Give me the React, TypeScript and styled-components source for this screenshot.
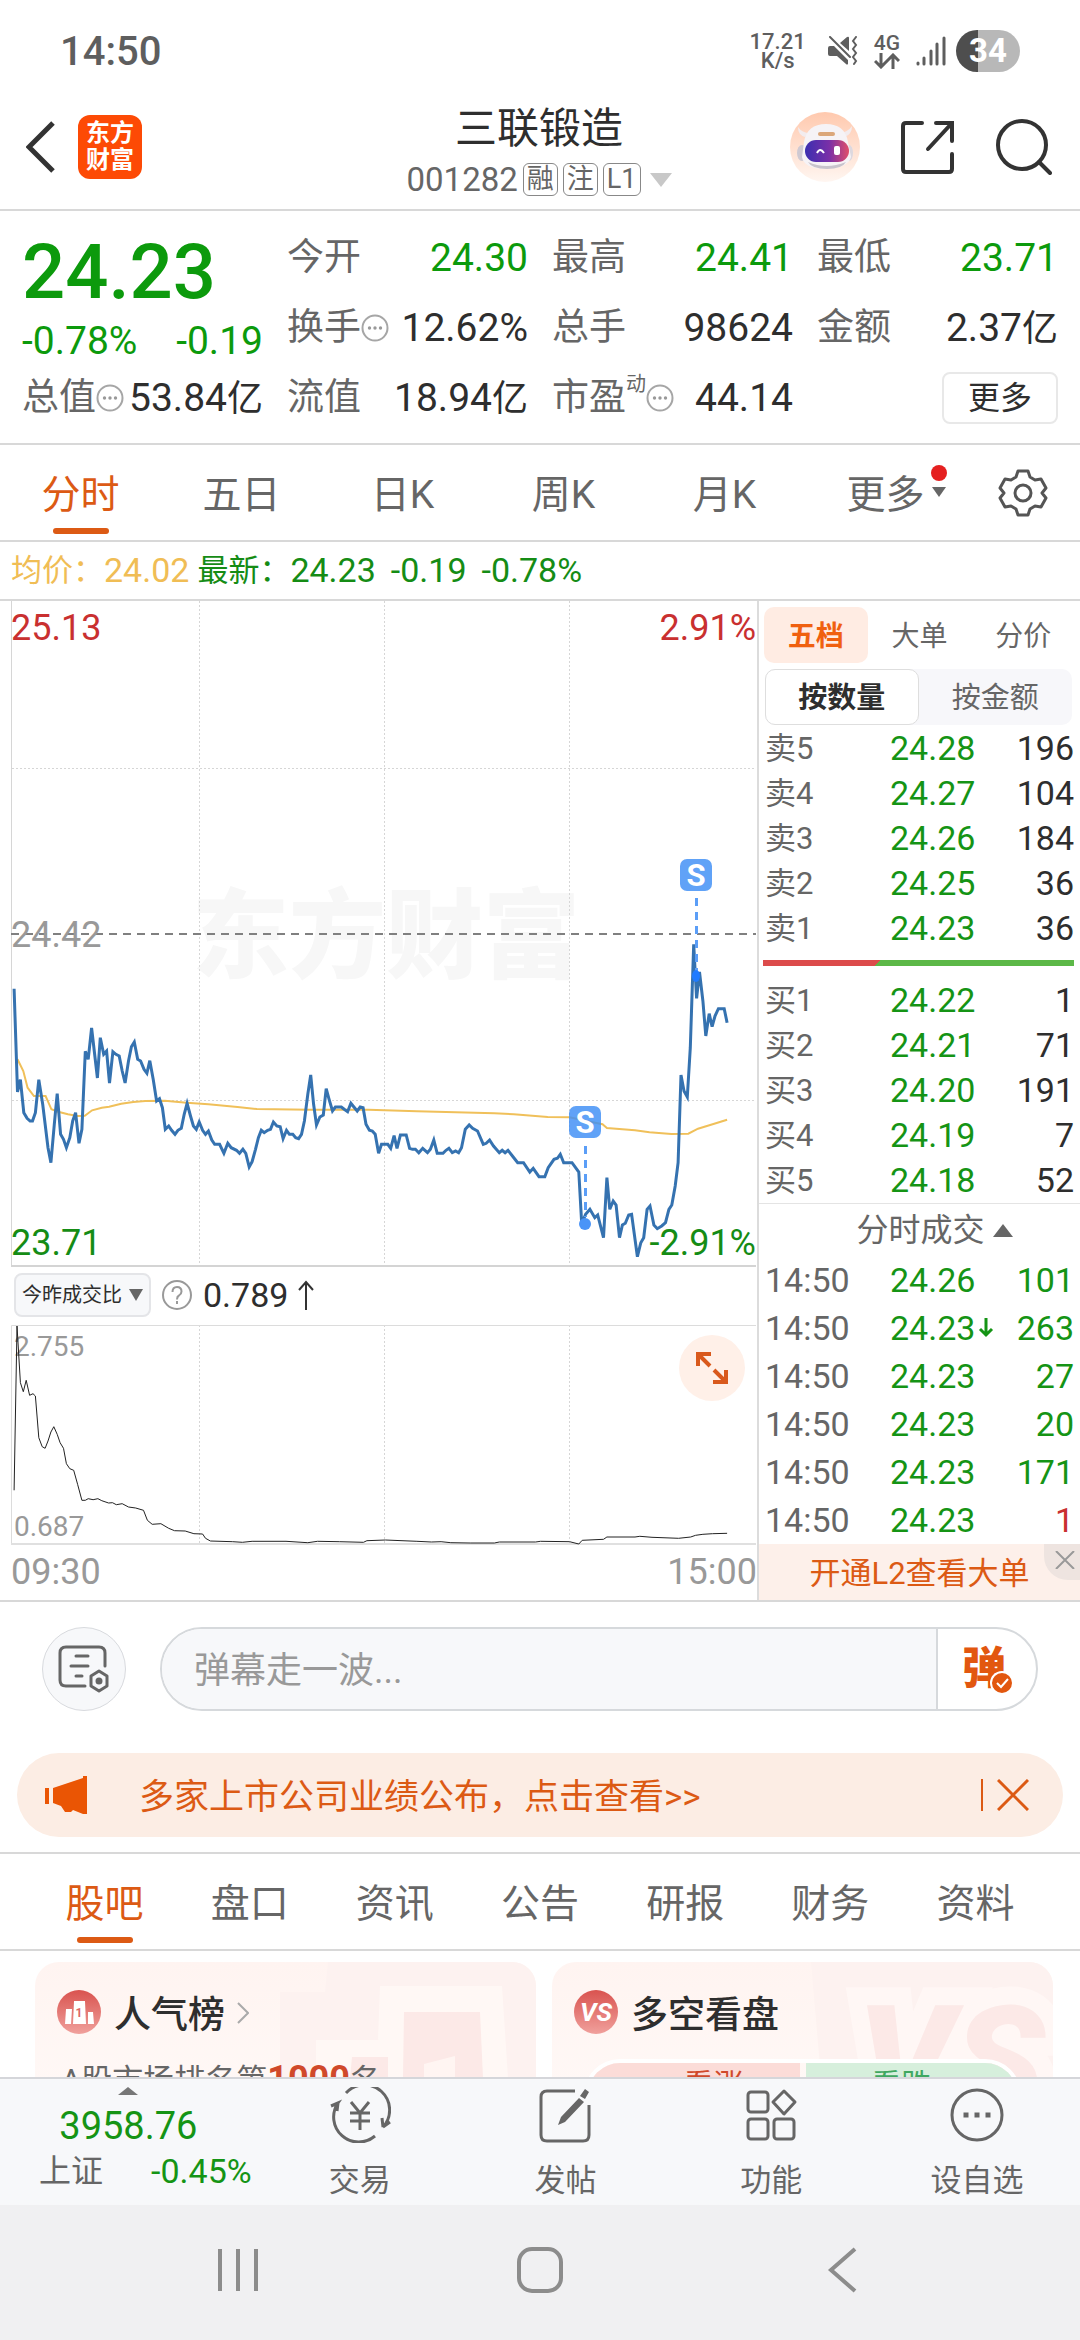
import React, { useState } from 'react';
import styled, { createGlobalStyle } from 'styled-components';

const quotes = [
  { label: '今开', value: '24.30', color: '#0c9a0c' },
  { label: '最高', value: '24.41', color: '#0c9a0c' },
  { label: '最低', value: '23.71', color: '#0c9a0c' },
  { label: '换手', value: '12.62%', info: true },
  { label: '总手', value: '98624' },
  { label: '金额', value: '2.37', unit: '亿' },
  { label: '总值', value: '53.84', unit: '亿', info: true },
  { label: '流值', value: '18.94', unit: '亿' },
  { label: '市盈', value: '44.14', sup: '动', info: true },
];

const sells = [
  ['卖5', '24.28', '196'],
  ['卖4', '24.27', '104'],
  ['卖3', '24.26', '184'],
  ['卖2', '24.25', '36'],
  ['卖1', '24.23', '36'],
];

const buys = [
  ['买1', '24.22', '1'],
  ['买2', '24.21', '71'],
  ['买3', '24.20', '191'],
  ['买4', '24.19', '7'],
  ['买5', '24.18', '52'],
];

const trades = [
  { price: '24.26', qty: '101' },
  { price: '24.23', qty: '263', down: true },
  { price: '24.23', qty: '27' },
  { price: '24.23', qty: '20' },
  { price: '24.23', qty: '171' },
  { price: '24.23', qty: '1', red: true },
];

// x, y pairs in sample units, scaled to the plot by toPoints
const priceLine =
  '29,443 36,753 42,716 49,815 56,832 62,840 67,840 73,815 80,716 88,790 99,920 105,965 112,850 118,758 125,880 131,895 137,920 144,890 150,840 156,815 163,907 169,865 176,631 182,655 189,561 201,711 207,590 214,640 220,630 226,726 233,632 239,640 246,645 252,690 258,726 265,660 271,617 277,603 284,655 290,660 297,685 303,697 309,659 316,715 323,780 329,773 335,800 341,865 348,855 354,868 361,880 367,868 374,862 380,820 386,787 393,825 399,855 405,865 411,843 418,868 424,880 430,870 437,897 443,910 453,910 462,937 470,907 477,920 488,928 494,937 501,925 507,937 514,978 520,962 527,925 533,890 539,868 545,875 552,868 558,865 564,843 571,855 578,857 584,893 591,868 597,880 604,880 610,890 616,893 622,880 628,840 635,760 641,702 647,790 653,852 660,828 667,822 673,743 679,775 686,810 692,798 704,798 710,805 717,812 724,787 730,798 737,810 743,798 749,800 755,850 762,868 768,870 774,880 781,937 787,910 800,910 806,922 813,884 819,922 826,882 838,882 845,922 851,925 857,925 864,935 872,922 882,935 888,925 895,897 902,937 914,937 920,928 926,922 933,935 940,930 946,935 952,920 960,865 968,852 975,862 985,870 997,910 1003,907 1010,897 1018,915 1030,935 1036,928 1042,935 1048,928 1060,950 1068,965 1080,965 1093,993 1100,982 1112,1007 1124,1007 1131,980 1143,955 1150,952 1156,940 1163,965 1180,965 1194,993 1200,1148 1208,1120 1217,1105 1227,1130 1233,1122 1245,1190 1252,1010 1258,1105 1265,1080 1271,1092 1278,1190 1284,1152 1290,1147 1297,1122 1303,1120 1315,1247 1322,1205 1328,1190 1335,1105 1341,1095 1349,1152 1356,1163 1365,1155 1373,1145 1380,1105 1386,1092 1393,1035 1399,965 1405,702 1411,750 1418,768 1424,620 1431,310 1437,472 1443,393 1450,480 1456,585 1463,518 1469,557 1475,525 1482,503 1494,503 1500,545';

const averageLine =
  '36,655 48,690 57,740 70,765 94,765 106,805 120,812 140,820 160,825 175,824 190,808 210,800 225,797 250,788 275,783 300,780 340,779 385,785 430,790 490,798 530,804 640,806 760,806 860,811 1020,817 1060,820 1130,828 1175,829 1210,840 1243,850 1252,861 1310,868 1340,874 1385,879 1420,878 1440,863 1470,850 1500,836';

const ratioLine =
  '29,748 35,255 42,425 48,452 54,418 61,463 68,458 73,465 80,590 87,617 93,622 99,600 105,573 111,557 118,580 124,605 131,622 137,668 144,683 152,688 160,730 169,778 176,778 182,773 192,776 202,773 210,779 224,786 232,785 240,791 252,788 265,798 280,801 296,808 304,838 314,850 332,848 348,862 360,869 382,870 400,878 418,879 424,892 434,900 480,902 500,904 520,901 590,901 635,905 655,901 700,902 750,904 757,899 795,897 860,901 890,903 910,902 930,905 970,906 1020,906 1030,903 1105,903 1115,901 1175,902 1194,909 1201,898 1245,895 1252,888 1310,888 1320,886 1345,889 1400,892 1425,888 1435,883 1450,880 1470,878 1500,877';

const toPoints = (line: string, offset: number) =>
  line
    .split(' ')
    .map((pair) => {
      const [x, y] = pair.split(',').map(Number);
      return `${(x / 2.063).toFixed(1)},${(y / 3 + offset).toFixed(1)}`;
    })
    .join(' ');

const InfoIcon = () => (
  <svg width='28' height='28' viewBox='0 0 28 28' fill='none'>
    <circle cx='14' cy='14' r='12.5' stroke='#a6a6a6' strokeWidth='2' />
    <g fill='#999'>
      <circle cx='8.5' cy='14' r='1.7' />
      <circle cx='14' cy='14' r='1.7' />
      <circle cx='19.5' cy='14' r='1.7' />
    </g>
  </svg>
);

const Marker = ({ x, y }: { x: number; y: number }) => (
  <g>
    <rect x={x - 16} y={y - 16} width='32' height='32' rx='7' fill='#3d8df5' fillOpacity='0.82' />
    <text x={x} y={y + 11} textAnchor='middle' fontSize='31' fontWeight='700' fill='#fff'>
      S
    </text>
  </g>
);

const PriceChart = () => (
  <ChartSvg viewBox='0 0 757 666'>
    <text x='386' y='369' textAnchor='middle' fontSize='97' fontWeight='900' fill='#f7f7f7'>
      东方财富
    </text>
    <g stroke='#d6d6d6' strokeDasharray='2 2'>
      <path d='M199.5 0V664M384.5 0V664M569.5 0V664M12 167.5H756M12 499.5H756' />
    </g>
    <path d='M11.5 0V665' stroke='#d6d6d6' />
    <path d='M11 665H756' stroke='#d4d4d4' strokeWidth='2' />
    <path d='M11 333H756' stroke='#808080' strokeWidth='2' strokeDasharray='8 6' />
    <g fontSize='36'>
      <text x='11' y='39' fill='#c93030'>25.13</text>
      <text x='756' y='39' textAnchor='end' fill='#c93030'>2.91%</text>
      <text x='11' y='346' fill='#999'>24.42</text>
      <text x='11' y='654' fill='#158c15'>23.71</text>
    </g>
    <polyline points={toPoints(averageLine, 240)} fill='none' stroke='#f0c05a' strokeWidth='2' />
    <polyline points={toPoints(priceLine, 240)} fill='none' stroke='#3572b0' strokeWidth='3' />
    <text x='756' y='654' fontSize='36' textAnchor='end' fill='#158c15'>-2.91%</text>
    <path d='M696.5 297V375M585.5 545V616' stroke='#5b9ef7' strokeWidth='3' strokeDasharray='8 6' />
    <ellipse cx='696' cy='375' rx='4' ry='6' fill='#1f7bff' />
    <circle cx='585' cy='623' r='6' fill='#4a94f7' />
    <Marker x={696} y={274} />
    <Marker x={585} y={521} />
  </ChartSvg>
);

const RatioChart = () => (
  <ChartSvg viewBox='0 0 757 220'>
    <g stroke='#d6d6d6' strokeDasharray='2 2'>
      <path d='M199.5 0V219M384.5 0V219M569.5 0V219' />
    </g>
    <path d='M11.5 219V0.5H756' fill='none' stroke='#dcdcdc' />
    <path d='M11 219H756' stroke='#e0e0e0' strokeWidth='2' />
    <g fontSize='28' fill='#999'>
      <text x='14' y='31'>2.755</text>
      <text x='14' y='211'>0.687</text>
    </g>
    <polyline points={toPoints(ratioLine, -84)} fill='none' stroke='#222' strokeWidth='1' />
  </ChartSvg>
);

const App = () => {
  const [comment, setComment] = useState('');

  return (
    <Page>
      <GlobalStyle />
      <StatusBar>
        <Clock>14:50</Clock>
        <StatusIcons>
          <Speed>
            <span>17.21</span>
            <span>K/s</span>
          </Speed>
          <svg width='30' height='30' viewBox='0 0 30 30' fill='#5e5e5e'>
            <path d='M0 12q0-2 2-2h4l14 14v4q-1 1-2 0l-9-8H2q-2 0-2-2zM12 7l7-6q2-1 2 1v13z' />
            <path
              d='M2 1l20 20M28 1l-3 4 3 4-3 4 3 4-3 4 3 4-2 3'
              fill='none'
              stroke='#5e5e5e'
              strokeWidth='2'
              strokeLinecap='round'
            />
          </svg>
          <Network>
            4G
            <svg width='26' height='16' viewBox='0 0 26 16' fill='none' stroke='#5e5e5e' strokeWidth='3'>
              <path d='M7 0v14M1 8l6 6 6-6M19 16V2M13 8l6-6 6 6' />
            </svg>
          </Network>
          <svg width='30' height='30' viewBox='0 0 30 30' stroke='#5e5e5e' strokeWidth='3' strokeLinecap='round'>
            <path d='M2 27v1M8 22v6M15 15v13M21 8v20M28 2v26' />
          </svg>
          <Battery>34</Battery>
        </StatusIcons>
      </StatusBar>

      <Header>
        <HeaderSide>
          <IconButton aria-label='返回'>
            <svg width='30' height='52' viewBox='0 0 30 52' fill='none' stroke='#333' strokeWidth='5'>
              <path d='M27 2L3 26l24 24' />
            </svg>
          </IconButton>
          <Logo>
            东方
            <br />
            财富
          </Logo>
        </HeaderSide>
        <HeaderTitle>
          <h1>三联锻造</h1>
          <StockCode>
            001282
            <Tag>融</Tag>
            <Tag>注</Tag>
            <Tag>L1</Tag>
            <svg width='22' height='14' viewBox='0 0 22 14' fill='#c8c8c8'>
              <path d='M0 0h22L11 14z' />
            </svg>
          </StockCode>
        </HeaderTitle>
        <HeaderSide $right>
          <IconButton aria-label='助手'>
            <svg width='70' height='70' viewBox='0 0 70 70'>
              <defs>
                <linearGradient id='halo' x2='0' y2='1'>
                  <stop stopColor='#ffc9ae' />
                  <stop offset='1' stopColor='#fff6f1' />
                </linearGradient>
                <linearGradient id='visor'>
                  <stop stopColor='#3b2fb0' />
                  <stop offset='0.55' stopColor='#7a2fa8' />
                  <stop offset='1' stopColor='#e0506a' />
                </linearGradient>
              </defs>
              <circle cx='35' cy='35' r='35' fill='url(#halo)' />
              <path d='M8 15q0 8 7 10l5-4q-8 0-12-6zM62 14q0 8-7 11l-5-4q8-1 12-7z' fill='#f3ecee' />
              <ellipse cx='12' cy='41' rx='5' ry='8' fill='#cfc9d2' />
              <ellipse cx='59' cy='41' rx='4' ry='8' fill='#ddd8df' />
              <path d='M14 30Q17 12 36 12t22 18l3 15q-3 11-25 12-22 0-24-12z' fill='#f6f3f6' />
              <path d='M18 50q18 8 38 0-4 7-19 7t-19-7z' fill='#c8c3cc' />
              <rect x='28' y='20' width='17' height='4' rx='2' fill='#dba77a' />
              <rect x='15' y='28' width='44' height='22' rx='11' fill='url(#visor)' />
              <path d='M27 41q3-6 7 0' fill='none' stroke='#fff' strokeWidth='2' />
              <rect x='44' y='34' width='6' height='9' rx='2' fill='#fff' />
            </svg>
          </IconButton>
          <IconButton aria-label='分享'>
            <svg width='56' height='56' viewBox='0 0 56 56' fill='none' stroke='#333' strokeWidth='4' strokeLinecap='round'>
              <path d='M22 4H6Q3 4 3 7v43q0 3 3 3h43q3 0 3-3V35M36 4h16v18M52 4L28 30' />
            </svg>
          </IconButton>
          <IconButton aria-label='搜索'>
            <svg width='56' height='56' viewBox='0 0 56 56' fill='none' stroke='#333' strokeWidth='4' strokeLinecap='round'>
              <circle cx='26' cy='26' r='24' />
              <path d='M43 43l11 11' />
            </svg>
          </IconButton>
        </HeaderSide>
      </Header>

      <QuoteSection>
        <LastPrice>
          <strong>24.23</strong>
          <Change>
            <span>-0.78%</span>
            <span>-0.19</span>
          </Change>
        </LastPrice>
        {quotes.map((quote) => (
          <Quote key={quote.label}>
            <QuoteLabel>
              {quote.label}
              {quote.sup && <sup>{quote.sup}</sup>}
              {quote.info && <InfoIcon />}
            </QuoteLabel>
            <QuoteValue $color={quote.color}>
              {quote.value}
              {quote.unit && <small>{quote.unit}</small>}
            </QuoteValue>
          </Quote>
        ))}
        <MoreButton>更多</MoreButton>
      </QuoteSection>

      <PeriodTabs>
        {['分时', '五日', '日K', '周K', '月K'].map((tab, index) => (
          <Tab key={tab} $active={index === 0}>
            {tab}
          </Tab>
        ))}
        <Tab>
          更多
          <MoreMark width='16' height='36' viewBox='0 0 16 36'>
            <circle cx='8' cy='8' r='8' fill='#e52020' />
            <path d='M1 22h14l-7 10z' fill='#666' />
          </MoreMark>
        </Tab>
        <IconButton aria-label='设置'>
          <svg width='50' height='50' viewBox='0 0 50 50' fill='none' stroke='#555' strokeWidth='3' strokeLinejoin='round'>
            <path d='M20 3h10l2 6 5 3 6-1 5 9-4 5 4 5-5 9-6-1-5 3-2 6H20l-2-6-5-3-6 1-5-9 4-5-4-5 5-9 6 1 5-3z' />
            <circle cx='25' cy='25' r='8' />
          </svg>
        </IconButton>
      </PeriodTabs>

      <PriceLine>
        <span>均价：</span>
        <b>24.02</b>
        <Latest>
          <span>最新：</span>
          <b>24.23</b>
          <b>-0.19</b>
          <b>-0.78%</b>
        </Latest>
      </PriceLine>

      <Market>
        <Charts>
          <PriceChart />
          <IndicatorBar>
            <Indicator>
              今昨成交比
              <svg width='14' height='12' viewBox='0 0 14 12' fill='#666'>
                <path d='M0 0h14L7 12z' />
              </svg>
            </Indicator>
            <svg width='32' height='32' viewBox='0 0 32 32' fill='none' stroke='#999' strokeWidth='2'>
              <circle cx='16' cy='16' r='14' />
              <path d='M11.500 13q0-5 4.500-5t4.500 4.500q0 2.500-2.500 4-2 1-2 4M16 22v3' />
            </svg>
            <span>0.789</span>
            <svg width='16' height='30' viewBox='0 0 16 30' fill='none' stroke='#333' strokeWidth='2'>
              <path d='M8 30V2M1 10l7-8 7 8' />
            </svg>
          </IndicatorBar>
          <RatioBox>
            <RatioChart />
            <ExpandButton aria-label='放大'>
              <svg width='32' height='32' viewBox='0 0 32 32' fill='none' stroke='#d9591c' strokeWidth='4'>
                <path d='M2 14V2h13M2 2l12 12M30 18v12H17M30 30L18 18' />
              </svg>
            </ExpandButton>
          </RatioBox>
          <TimeAxis>
            <span>09:30</span>
            <span>15:00</span>
          </TimeAxis>
        </Charts>

        <OrderBook>
          <BookTabs>
            <BookTab $active>五档</BookTab>
            <BookTab>大单</BookTab>
            <BookTab>分价</BookTab>
          </BookTabs>
          <Segment>
            <SegmentButton $active>按数量</SegmentButton>
            <SegmentButton>按金额</SegmentButton>
          </Segment>
          <BookTable>
            <tbody>
              {sells.map(([level, price, qty]) => (
                <tr key={level}>
                  <th>{level}</th>
                  <PriceCell>{price}</PriceCell>
                  <QtyCell>{qty}</QtyCell>
                </tr>
              ))}
            </tbody>
          </BookTable>
          <DepthBar />
          <BookTable>
            <tbody>
              {buys.map(([level, price, qty]) => (
                <tr key={level}>
                  <th>{level}</th>
                  <PriceCell>{price}</PriceCell>
                  <QtyCell>{qty}</QtyCell>
                </tr>
              ))}
            </tbody>
          </BookTable>
          <TradesTitle>
            分时成交
            <svg width='20' height='13' viewBox='0 0 20 13' fill='#666'>
              <path d='M0 13L10 0l10 13z' />
            </svg>
          </TradesTitle>
          <BookTable $tall>
            <tbody>
              {trades.map((trade, index) => (
                <tr key={index}>
                  <th>14:50</th>
                  <PriceCell>
                    {trade.price}
                    {trade.down && (
                      <svg width='16' height='22' viewBox='0 0 16 22' fill='none' stroke='#159415' strokeWidth='3'>
                        <path d='M8 0v17M2 11l6 6 6-6' />
                      </svg>
                    )}
                  </PriceCell>
                  <QtyCell $color={trade.red ? '#c93030' : '#159415'}>{trade.qty}</QtyCell>
                </tr>
              ))}
            </tbody>
          </BookTable>
          <LevelTwo>
            <a href='#l2'>开通L2查看大单</a>
            <CloseCorner aria-label='关闭'>
              <svg width='20' height='18' viewBox='0 0 20 18' stroke='#999' strokeWidth='2'>
                <path d='M1 0l18 18M19 0L1 18' />
              </svg>
            </CloseCorner>
          </LevelTwo>
        </OrderBook>
      </Market>

      <CommentRow>
        <RoundButton aria-label='弹幕设置'>
          <svg width='52' height='48' viewBox='0 0 52 48' fill='none' stroke='#666' strokeWidth='3' strokeLinecap='round'>
            <path d='M27 41H8q-6 0-6-6V8q0-6 6-6h33q6 0 6 6v13M18 11h12M13 21h17M18 31h6' />
            <path d='M41 26l8 5v10l-8 5-8-5V31z' strokeLinejoin='round' />
            <circle cx='41' cy='36' r='2' fill='#666' />
          </svg>
        </RoundButton>
        <CommentBox>
          <input
            aria-label='弹幕'
            placeholder='弹幕走一波...'
            value={comment}
            onChange={(e) => setComment(e.target.value)}
          />
          <BarrageButton>
            弹
            <BarrageCheck width='24' height='24' viewBox='0 0 24 24'>
              <circle cx='12' cy='12' r='11' fill='#e2570f' stroke='#fff' strokeWidth='2' />
              <path d='M7 12l4 4 7-8' fill='none' stroke='#fff' strokeWidth='2' />
            </BarrageCheck>
          </BarrageButton>
        </CommentBox>
      </CommentRow>

      <Notice>
        <svg width='44' height='38' viewBox='0 0 44 38' fill='#ea5504'>
          <path d='M0 12h4v16H0zM8 12L38 2V0h4v38h-4l-10-4-2 2h-6l-4-6-8-3z' />
        </svg>
        <a href='#notice'>多家上市公司业绩公布，点击查看&gt;&gt;</a>
        <IconButton aria-label='关闭'>
          <svg width='32' height='32' viewBox='0 0 32 32' stroke='#dc5a14' strokeWidth='3'>
            <path d='M1 1l30 30M31 1L1 31' />
          </svg>
        </IconButton>
      </Notice>

      <SectionTabs>
        {['股吧', '盘口', '资讯', '公告', '研报', '财务', '资料'].map((tab, index) => (
          <Tab key={tab} $active={index === 0}>
            {tab}
          </Tab>
        ))}
      </SectionTabs>

      <Cards>
        <Card>
          <CardArt width='256' height='116' viewBox='0 0 256 116'>
            <path d='M48 0h208v116H0V30h45z' fill='#fdf2f0' />
            <path d='M100 24h122l6 92H36V78h62z' fill='#fff8f5' />
            <path d='M124 50h76l3 66h-80zM72 95h36v21H70z' fill='#fce9e7' />
            <path d='M144 102l31-8v22h-31z' fill='#fff5f2' />
          </CardArt>
          <CardTitle>
            <svg width='45' height='45' viewBox='0 0 45 45'>
              <defs>
                <linearGradient id='badge' x2='0' y2='1'>
                  <stop stopColor='#d9534f' />
                  <stop offset='1' stopColor='#f0a09c' />
                </linearGradient>
              </defs>
              <circle cx='22' cy='22' r='22' fill='url(#badge)' />
              <path d='M9 19h6l-1 15H8zM17 11h11l1 23H16zM31 22h5l1 12h-6z' fill='#fff' />
              <text x='22' y='27' textAnchor='middle' fontSize='12' fontWeight='700' fill='#dd6662'>1</text>
            </svg>
            <h2>人气榜</h2>
            <svg width='12' height='22' viewBox='0 0 12 22' fill='none' stroke='#aaa' strokeWidth='2'>
              <path d='M1 1l10 10L1 21' />
            </svg>
          </CardTitle>
          <RankText>
            A股市场排名第<em>1000</em>名
          </RankText>
        </Card>
        <Card>
          <CardArt width='242' height='116' viewBox='0 0 242 116'>
            <path d='M0 0h242v116H10z' fill='#fdf2f0' />
            <text
              x='140'
              y='150'
              textAnchor='middle'
              fontSize='150'
              fontStyle='italic'
              fontWeight='900'
              fill='#fce9e7'
              stroke='#fff7f5'
              strokeWidth='36'
              paintOrder='stroke'
            >
              VS
            </text>
          </CardArt>
          <CardTitle>
            <svg width='45' height='45' viewBox='0 0 45 45'>
              <circle cx='22' cy='22' r='22' fill='url(#badge)' />
              <text x='22' y='31' textAnchor='middle' fontSize='26' fontStyle='italic' fontWeight='700' fill='#fff'>VS</text>
            </svg>
            <h2>多空看盘</h2>
          </CardTitle>
          <Votes>
            <Vote>看涨</Vote>
            <Vote $green>看跌</Vote>
          </Votes>
        </Card>
      </Cards>

      <BottomBar>
        <IndexBox>
          <svg width='20' height='8' viewBox='0 0 20 8' fill='#777'>
            <path d='M0 8L10 0l10 8z' />
          </svg>
          <IndexValue>3958.76</IndexValue>
          <IndexChange>
            <span>上证</span>
            <b>-0.45%</b>
          </IndexChange>
        </IndexBox>
        <Action>
          <svg width='62' height='56' viewBox='0 0 62 56' fill='none' stroke='#666' strokeWidth='3'>
            <path d='M17 6A25 25 0 0 1 54 40l7-5M46 49A25 25 0 0 1 9 16L2 19M54 40l-1-9M9 16l-1 8' />
            <path d='M22 15l9 11 9-11M31 26v17M21 26h20M21 34h20' />
          </svg>
          交易
        </Action>
        <Action>
          <svg width='54' height='56' viewBox='0 0 54 56' fill='none' stroke='#666' strokeWidth='3'>
            <path d='M37 4H9Q3 4 3 10v38q0 6 6 6h36q6 0 6-6V18' />
            <path d='M47 2l4 3-4 7-5-3zM41 11l5 4-19 20-7 3 3-8z' fill='#666' stroke='none' />
          </svg>
          发帖
        </Action>
        <Action>
          <svg width='54' height='56' viewBox='0 0 54 56' fill='none' stroke='#666' strokeWidth='3'>
            <rect x='4' y='5' width='20' height='20' rx='3' />
            <rect x='4' y='32' width='20' height='20' rx='3' />
            <rect x='30' y='32' width='20' height='20' rx='3' />
            <path d='M40 4l11 11-11 12-11-12z' strokeLinejoin='round' />
          </svg>
          功能
        </Action>
        <Action>
          <svg width='54' height='56' viewBox='0 0 54 56' fill='none' stroke='#666' strokeWidth='3'>
            <circle cx='27' cy='28' r='25' />
            <path d='M16 25.500v5M27 25.500v5M38 25.500v5' strokeWidth='5' />
          </svg>
          设自选
        </Action>
      </BottomBar>

      <SystemNav>
        <IconButton aria-label='最近'>
          <svg width='44' height='46' viewBox='0 0 44 46' stroke='#8c8c8c' strokeWidth='4'>
            <path d='M4 2v42M22 2v42M40 2v42' />
          </svg>
        </IconButton>
        <IconButton aria-label='主页'>
          <svg width='46' height='46' viewBox='0 0 46 46' fill='none' stroke='#8c8c8c' strokeWidth='4'>
            <rect x='2' y='2' width='42' height='42' rx='13' />
          </svg>
        </IconButton>
        <IconButton aria-label='后退'>
          <svg width='30' height='46' viewBox='0 0 30 46' fill='none' stroke='#8c8c8c' strokeWidth='4'>
            <path d='M28 2L4 23l24 21' />
          </svg>
        </IconButton>
      </SystemNav>
    </Page>
  );
};

export default App;

const GlobalStyle = createGlobalStyle`
  * {
    box-sizing: border-box;
  }

  body {
    margin: 0;
    background: #fff;
    color: #2e2e2e;
    font-family: Roboto, 'Noto Sans CJK SC', sans-serif;
  }

  button,
  input {
    font: inherit;
    color: inherit;
    border: none;
    background: none;
    padding: 0;
    margin: 0;
  }

  a {
    text-decoration: none;
  }

  svg {
    flex-shrink: 0;
  }
`;

const Page = styled.div`
  min-height: 100vh;
  display: flex;
  flex-direction: column;
`;

const StatusBar = styled.div`
  display: flex;
  justify-content: space-between;
  align-items: center;
  height: 90px;
  padding: 12px 60px 0;
  color: #5e5e5e;
`;

const Clock = styled.span`
  font-size: 40px;
  font-weight: 500;
`;

const StatusIcons = styled.div`
  display: flex;
  align-items: center;
  gap: 16px;
`;

const Speed = styled.span`
  display: flex;
  flex-direction: column;
  align-items: center;
  font-size: 22px;
  line-height: 19px;
  font-weight: 500;
  margin-right: 6px;
`;

const Network = styled.span`
  display: flex;
  flex-direction: column;
  align-items: center;
  font-size: 21px;
  line-height: 19px;
  font-weight: 500;
`;

const Battery = styled.span`
  width: 64px;
  border-radius: 21px;
  background: linear-gradient(90deg, #4e4e4e 34%, #b8b8b8 34%);
  color: #fff;
  font-size: 33px;
  line-height: 42px;
  font-weight: 700;
  text-align: center;
  margin-left: -6px;
`;

const IconButton = styled.button`
  display: flex;
  align-items: center;
  justify-content: center;
`;

const Header = styled.header`
  display: grid;
  grid-template-columns: 1fr auto 1fr;
  align-items: center;
  height: 121px;
  padding: 0 28px 6px 26px;
  border-bottom: 2px solid #d8d8d8;
`;

const HeaderSide = styled.div<{ $right?: boolean }>`
  display: flex;
  align-items: center;
  justify-content: ${({ $right }) => ($right ? 'flex-end' : 'flex-start')};
  gap: ${({ $right }) => ($right ? '40px' : '22px')};
`;

const Logo = styled.span`
  width: 64px;
  height: 64px;
  padding: 5px 0;
  border-radius: 12px;
  background: #fd4a05;
  color: #fff;
  font-size: 24px;
  line-height: 27px;
  font-weight: 700;
  text-align: center;
`;

const HeaderTitle = styled.div`
  display: flex;
  flex-direction: column;
  align-items: center;
  padding-top: 10px;

  h1 {
    margin: 0;
    font-size: 42px;
    line-height: 56px;
    font-weight: 400;
  }
`;

const StockCode = styled.div`
  display: flex;
  align-items: center;
  gap: 5px;
  font-size: 33px;
  line-height: 46px;
  color: #666;

  svg {
    margin-left: 4px;
  }
`;

const Tag = styled.span`
  min-width: 34px;
  padding: 0 3px;
  border: 1px solid #888;
  border-radius: 6px;
  font-size: 27px;
  line-height: 31px;
  text-align: center;
`;

const QuoteSection = styled.section`
  display: grid;
  grid-template-columns: repeat(4, 1fr);
  grid-auto-rows: 70px;
  column-gap: 24px;
  padding: 12px 22px 10px;
  border-bottom: 2px solid #d8d8d8;
`;

const LastPrice = styled.div`
  grid-row: span 2;
  padding-top: 3px;
  color: #0c9a0c;

  strong {
    display: block;
    font-size: 76px;
    line-height: 92px;
    font-weight: 500;
  }
`;

const Change = styled.div`
  display: flex;
  justify-content: space-between;
  font-size: 39px;
  line-height: 46px;
`;

const Quote = styled.div`
  display: flex;
  align-items: center;
  justify-content: space-between;
  white-space: nowrap;
`;

const QuoteLabel = styled.span`
  display: flex;
  align-items: center;
  font-size: 37px;
  line-height: 48px;
  color: #666;

  sup {
    font-size: 20px;
    line-height: 20px;
    align-self: flex-start;
  }
`;

const QuoteValue = styled.span<{ $color?: string }>`
  font-size: 39px;
  line-height: 48px;
  color: ${({ $color }) => $color || '#2e2e2e'};

  small {
    font-size: 36px;
  }
`;

const MoreButton = styled.button`
  justify-self: end;
  align-self: center;
  width: 116px;
  border: 2px solid #e8e8e8;
  border-radius: 8px;
  font-size: 32px;
  line-height: 48px;
`;

const PeriodTabs = styled.nav`
  display: grid;
  grid-template-columns: repeat(6, 161fr) 114fr;
  border-bottom: 2px solid #d8d8d8;
`;

const SectionTabs = styled.nav`
  display: grid;
  grid-template-columns: repeat(7, 1fr);
  padding: 0 32px;
  border-top: 2px solid #d8d8d8;
  border-bottom: 2px solid #d8d8d8;
`;

const Tab = styled.button<{ $active?: boolean }>`
  position: relative;
  padding-top: 6px;
  font-size: 39px;
  line-height: 89px;
  color: ${({ $active }) => ($active ? '#dc5a14' : '#666')};

  &::after {
    content: '';
    position: absolute;
    left: 50%;
    bottom: 6px;
    width: 56px;
    height: 6px;
    margin-left: -28px;
    border-radius: 3px;
    background: ${({ $active }) => ($active ? '#dc5a14' : 'transparent')};
  }
`;

const MoreMark = styled.svg`
  position: absolute;
  top: 20px;
  right: 19px;
`;

const PriceLine = styled.div`
  display: flex;
  align-items: center;
  padding: 0 11px;
  font-size: 31px;
  line-height: 57px;
  color: #f0bd55;
  border-bottom: 2px solid #d8d8d8;

  b {
    font-size: 34px;
    font-weight: 400;
  }
`;

const Latest = styled.span`
  display: flex;
  margin-left: 8px;
  color: #158c15;

  b + b {
    margin-left: 15px;
  }
`;

const Market = styled.main`
  display: flex;
  border-bottom: 2px solid #d8d8d8;
`;

const Charts = styled.section`
  flex: 1;
  min-width: 0;
`;

const ChartSvg = styled.svg`
  display: block;
  width: 100%;
`;

const IndicatorBar = styled.div`
  display: flex;
  align-items: center;
  gap: 10px;
  height: 58px;
  padding: 0 0 2px 14px;
  font-size: 34px;
`;

const Indicator = styled.button`
  display: flex;
  align-items: center;
  gap: 7px;
  padding: 0 6px;
  border: 2px solid #e4e5e8;
  border-radius: 8px;
  background: #f7f8fa;
  font-size: 20px;
  line-height: 40px;
`;

const RatioBox = styled.div`
  position: relative;
`;

const ExpandButton = styled(IconButton)`
  position: absolute;
  top: 10px;
  right: 12px;
  width: 66px;
  height: 66px;
  border-radius: 50%;
  background: #fff0e8;
`;

const TimeAxis = styled.div`
  display: flex;
  justify-content: space-between;
  padding-left: 11px;
  font-size: 36px;
  line-height: 55px;
  color: #999;
`;

const OrderBook = styled.aside`
  width: 323px;
  border-left: 2px solid #dcdcdc;
`;

const BookTabs = styled.div`
  display: grid;
  grid-template-columns: repeat(3, 1fr);
  padding: 6px 5px;
`;

const BookTab = styled.button<{ $active?: boolean }>`
  padding-top: 4px;
  border-radius: 10px;
  font-size: 28px;
  line-height: 52px;
  font-weight: ${({ $active }) => ($active ? 700 : 400)};
  color: ${({ $active }) => ($active ? '#f0600f' : '#666')};
  background: ${({ $active }) => ($active ? '#ffece3' : 'none')};
`;

const Segment = styled.div`
  display: grid;
  grid-template-columns: repeat(2, 1fr);
  margin: 0 8px 1px 6px;
  border-radius: 10px;
  background: #f7f7fa;
`;

const SegmentButton = styled.button<{ $active?: boolean }>`
  padding-top: 2px;
  border: 1px solid ${({ $active }) => ($active ? '#dedede' : 'transparent')};
  border-radius: 10px;
  font-size: 29px;
  line-height: 52px;
  font-weight: ${({ $active }) => ($active ? 700 : 400)};
  color: ${({ $active }) => ($active ? '#2e2e2e' : '#666')};
  background: ${({ $active }) => ($active ? '#fff' : 'none')};
`;

const BookTable = styled.table<{ $tall?: boolean }>`
  width: 100%;
  table-layout: fixed;
  border-collapse: collapse;
  font-size: 34px;
  line-height: ${({ $tall }) => ($tall ? '48px' : '45px')};

  th,
  td {
    padding: 0;
    height: ${({ $tall }) => ($tall ? '48px' : '45px')};
    line-height: inherit;
    white-space: nowrap;
  }

  th {
    width: 131px;
    padding-left: 6px;
    font-size: ${({ $tall }) => ($tall ? '34px' : '31px')};
    font-weight: 400;
    text-align: left;
    color: #666;
  }
`;

const PriceCell = styled.td`
  width: 104px;
  color: #159415;

  svg {
    margin-left: 3px;
  }
`;

const QtyCell = styled.td<{ $color?: string }>`
  text-align: right;
  color: ${({ $color }) => $color || '#2e2e2e'};

  && {
    padding-right: 6px;
  }
`;

const DepthBar = styled.div`
  height: 6px;
  margin: 9px 6px 12px 4px;
  background: linear-gradient(135deg, #dc4b4b 37%, #5cb847 37%);
`;

const TradesTitle = styled.div`
  display: flex;
  align-items: center;
  justify-content: center;
  gap: 8px;
  padding-left: 30px;
  border-top: 1px solid #e4e4e4;
  font-size: 32px;
  line-height: 52px;
  color: #666;
`;

const LevelTwo = styled.div`
  position: relative;
  padding-top: 4px;
  background: #fdf0ea;
  text-align: center;

  a {
    display: block;
    font-size: 31px;
    line-height: 52px;
    color: #dc5a14;
  }
`;

const CloseCorner = styled(IconButton)`
  position: absolute;
  top: 0;
  right: 0;
  width: 36px;
  height: 36px;
  padding-left: 6px;
  padding-bottom: 4px;
  border-bottom-left-radius: 24px;
  background: #eee4e0;
`;

const CommentRow = styled.div`
  display: flex;
  gap: 34px;
  padding: 25px 42px 42px;
`;

const RoundButton = styled(IconButton)`
  width: 84px;
  height: 84px;
  border: 1px solid #d8dade;
  border-radius: 50%;
  background: #f7f8fa;
`;

const CommentBox = styled.div`
  display: flex;
  flex: 1;
  overflow: hidden;
  border: 2px solid #d6d9dc;
  border-radius: 42px;

  input {
    flex: 1;
    min-width: 0;
    padding: 4px 34px 0 32px;
    background: #f7f8fa;
    font-size: 36px;
    outline: none;
  }

  input::placeholder {
    color: #999;
  }
`;

const BarrageButton = styled.button`
  position: relative;
  width: 100px;
  padding-right: 6px;
  border-left: 2px solid #d6d9dc;
  font-size: 44px;
  line-height: 76px;
  font-weight: 900;
  color: #e2570f;
`;

const BarrageCheck = styled.svg`
  position: absolute;
  right: 22px;
  bottom: 14px;
`;

const Notice = styled.div`
  display: flex;
  align-items: center;
  height: 84px;
  margin: 0 17px 15px;
  padding: 0 34px 0 28px;
  border-radius: 42px;
  background: #fcede4;

  a {
    flex: 1;
    margin-left: 50px;
    padding-bottom: 4px;
    font-size: 35px;
    color: #dc5a14;
  }

  button {
    padding-left: 14px;
    border-left: 2px solid #dc5a14;
  }
`;

const Cards = styled.section`
  display: grid;
  grid-template-columns: 1fr 1fr;
  gap: 16px;
  flex: 1 0 0;
  height: 0;
  padding: 11px 27px 0 35px;
  overflow: hidden;
`;

const Card = styled.article`
  position: relative;
  height: 180px;
  padding: 28px 22px;
  border-radius: 24px;
  background: linear-gradient(#fff4f1, #fffaf8);
  overflow: hidden;
`;

const CardArt = styled.svg`
  position: absolute;
  top: 0;
  right: 0;
`;

const CardTitle = styled.div`
  position: relative;
  display: flex;
  align-items: center;
  gap: 12px;
  height: 45px;

  h2 {
    margin: 0;
    padding-top: 6px;
    font-size: 37px;
    line-height: 45px;
    font-weight: 500;
  }
`;

const RankText = styled.p`
  position: relative;
  margin: 20px 4px;
  font-size: 31px;
  line-height: 48px;
  color: #666;

  em {
    font-size: 36px;
    font-style: normal;
    font-weight: 700;
    color: #d0492a;
  }
`;

const Votes = styled.div`
  position: relative;
  display: grid;
  grid-template-columns: 1fr 1fr;
  gap: 6px;
  margin: 24px 10px;
  border: 4px solid #fff;
  border-radius: 40px;
  overflow: hidden;
`;

const Vote = styled.div<{ $green?: boolean }>`
  padding: 0 24px 20px;
  font-size: 30px;
  line-height: 44px;
  text-align: ${({ $green }) => ($green ? 'center' : 'right')};
  padding-right: ${({ $green }) => ($green ? '44px' : '56px')};
  color: ${({ $green }) => ($green ? '#3fa860' : '#d0492a')};
  background: ${({ $green }) => ($green ? '#d6efdc' : '#fbdcd8')};
`;

const BottomBar = styled.footer`
  display: grid;
  grid-template-columns: 257fr repeat(4, 206fr);
  height: 128px;
  border-top: 2px solid #d5d6da;
  background: #f7f8fa;
`;

const IndexBox = styled.div`
  display: flex;
  flex-direction: column;
  align-items: center;
  padding-top: 8px;
`;

const IndexValue = styled.span`
  margin-top: 6px;
  font-size: 38px;
  line-height: 50px;
  color: #159415;
`;

const IndexChange = styled.span`
  display: flex;
  align-items: center;
  gap: 48px;
  margin-left: 34px;
  font-size: 32px;
  line-height: 40px;
  color: #666;

  b {
    font-size: 34px;
    font-weight: 400;
    color: #159415;
  }
`;

const Action = styled.button`
  display: flex;
  flex-direction: column;
  align-items: center;
  gap: 14px;
  padding-top: 8px;
  font-size: 31px;
  line-height: 48px;
  color: #666;
`;

const SystemNav = styled.nav`
  display: grid;
  grid-template-columns: repeat(3, 1fr);
  height: 135px;
  padding: 0 87px 6px;
  background: #f0f0f2;
`;
